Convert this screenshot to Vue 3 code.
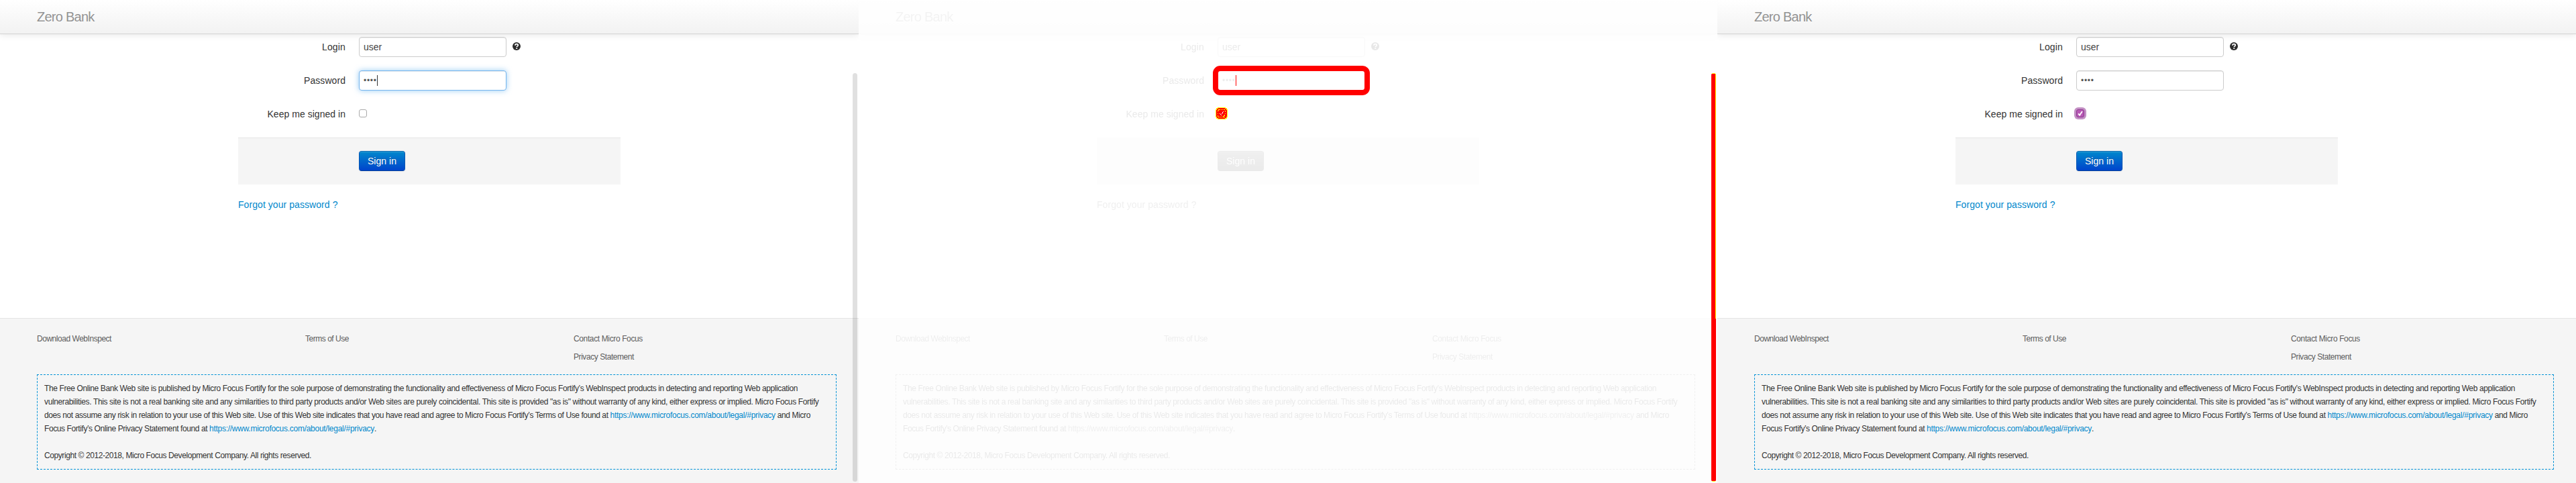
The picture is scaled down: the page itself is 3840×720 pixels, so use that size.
<script setup>
const panels = [
  { id: 'before', kind: 'live', focused: true, checked: false },
  { id: 'diff', kind: 'ghost', focused: false, checked: false },
  { id: 'after', kind: 'live', focused: false, checked: true },
]

const url = 'https://www.microfocus.com/about/legal/#privacy'

const lines = [
  [{ w: 1123, t: 'The Free Online Bank Web site is published by Micro Focus Fortify for the sole purpose of demonstrating the functionality and effectiveness of Micro Focus Fortify’s WebInspect products in detecting and reporting Web application' }],
  [{ w: 1154.5, t: 'vulnerabilities. This site is not a real banking site and any similarities to third party products and/or Web sites are purely coincidental. This site is provided "as is" without warranty of any kind, either express or implied. Micro Focus Fortify' }],
  [{ w: 843.5, t: 'does not assume any risk in relation to your use of this Web site. Use of this Web site indicates that you have read and agree to Micro Focus Fortify’s Terms of Use found at ' }, { w: 246.3, t: url, link: true }, { w: 52.2, t: ' and Micro' }],
  [{ w: 246, t: 'Focus Fortify’s Online Privacy Statement found at ' }, { w: 246, t: url, link: true }, { w: 0, t: '.' }],
  [{ w: 0, t: '\u00a0' }],
  [{ w: 398, t: 'Copyright © 2012-2018, Micro Focus Development Company. All rights reserved.' }],
]

// Spreads the tracking of a run so that it sets to the given width.
const vFit = {
  mounted(el, { value }) {
    if (!value) return
    const natural = el.getBoundingClientRect().width
    el.style.letterSpacing = `${(value - natural) / el.textContent.length}px`
  },
}
</script>

<template>
  <main class="board">
    <section v-for="p in panels" :key="p.id" class="panel">
      <div class="page" :class="p.kind">
        <header class="navbar"><span v-fit="85.5" class="brand">Zero Bank</span></header>

        <form class="form" @submit.prevent>
          <div class="row">
            <label><span v-fit="35">Login</span></label>
            <div class="input"><span v-fit="27">user</span></div>
            <svg class="help" width="12" height="12" viewBox="0 0 12 12">
              <circle cx="6" cy="6" r="6" fill="#2b2b2b" />
              <path d="M3.9 4.7C3.9 3.3 4.8 2.6 6.1 2.6S8.3 3.3 8.3 4.4C8.3 5.8 6.3 5.7 6.3 7.1" fill="none" stroke="#fff" stroke-width="1.7" />
              <rect x="5.3" y="8" width="1.9" height="1.8" fill="#fff" />
            </svg>
          </div>
          <div class="row">
            <label><span v-fit="62">Password</span></label>
            <div class="input" :class="{ focused: p.focused }">
              <span v-fit="19.6" class="dots">••••</span><i v-if="p.focused" class="caret"></i>
            </div>
          </div>
          <div class="row">
            <label><span v-fit="116.5">Keep me signed in</span></label>
            <div class="check" :class="{ on: p.checked }">
              <svg v-if="p.checked" width="12" height="12" viewBox="0 0 12 12">
                <path d="M3.1 6.4L5.1 8.7L8.9 3.1" fill="none" stroke="#fff" stroke-width="1.8" />
              </svg>
            </div>
          </div>
          <div class="actions"><button class="btn"><span v-fit="43">Sign in</span></button></div>
          <a class="forgot"><span v-fit="148.5">Forgot your password ?</span></a>
        </form>

        <footer class="footer">
          <div class="links">
            <div class="col"><a><span v-fit="111">Download WebInspect</span></a></div>
            <div class="col"><a><span v-fit="65">Terms of Use</span></a></div>
            <div class="col">
              <a><span v-fit="103">Contact Micro Focus</span></a>
              <a><span v-fit="90">Privacy Statement</span></a>
            </div>
          </div>
          <div class="disclaimer">
            <div v-for="(parts, i) in lines" :key="i" class="line">
              <span v-for="(s, j) in parts" :key="j" v-fit="s.w" :class="{ url: s.link }">{{ s.t }}</span>
            </div>
          </div>
        </footer>
      </div>

      <div v-if="p.id === 'before'" class="scrollbar"></div>
      <template v-if="p.id === 'diff'">
        <div class="ring"></div>
        <div class="diff-caret"></div>
        <svg class="diff-check" width="18" height="18" viewBox="0 0 18 18" shape-rendering="crispEdges">
          <path d="M3 0H15V1H17V3H18V15H17V17H15V18H3V17H1V15H0V3H1V1H3Z" fill="#ff0" />
          <path d="M4 1H14V2H16V4H17V14H16V16H14V17H4V16H2V14H1V4H2V2H4Z" fill="#f00" />
          <path d="M4 3h3v1h-3zM8 3h1v1h-1zM10 3h1v1h-1zM12 3h2v1h-2zM3 4h2v1h-2zM3 6h1v1h-1zM3 9h1v1h-1zM3 12h1v2h-1zM14 5h1v2h-1zM14 9h1v1h-1zM4 14h2v1h-2zM7 14h1v1h-1zM9 14h1v1h-1zM11 14h3v1h-3zM12 12h2v1h-2zM13 11h1v1h-1zM11 13h1v1h-1z" fill="#ff0" />
          <path d="M6 9h1v1h-1zM7 10h1v1h-1zM8 11h1v1h-1zM9 9h1v1h-1zM10 7h1v2h-1zM11 6h1v1h-1z" fill="#fff" />
        </svg>
        <div class="diff-scroll"></div>
      </template>
    </section>
  </main>
</template>

<style>
body { background: #fff; overflow: hidden; }
</style>

<style scoped>
.board { display: flex; width: 3840px; height: 720px; font-family: "Liberation Sans", Arial, sans-serif; font-size: 14px; line-height: 20px; color: #333; background: #fff; }
.panel { position: relative; width: 1280px; height: 720px; overflow: hidden; }
.page { display: flex; flex-direction: column; width: 1280px; height: 720px; background: #fff; }
.ghost { filter: grayscale(1); opacity: 0.1; }
span { white-space: pre; }
.navbar { box-sizing: border-box; flex: none; height: 51px; padding: 15px 55px; border-bottom: 1px solid #d4d4d4; background: linear-gradient(#fff, #f2f2f2); box-shadow: 0 1px 10px rgba(0, 0, 0, 0.1); }
.brand { display: inline-block; font-size: 20px; color: #929292; text-shadow: 0 1px 0 #fff; }
.form { display: flex; flex-direction: column; width: 570px; margin: 4px 0 0 355px; }
.row { display: flex; height: 30px; margin-bottom: 20px; }
label { width: 160px; margin-right: 20px; padding-top: 5px; text-align: right; }
.input { display: flex; align-items: center; box-sizing: border-box; width: 220px; height: 30px; padding: 0 6px; border: 1px solid #ccc; border-radius: 4px; background: #fff; box-shadow: inset 0 1px 1px rgba(0, 0, 0, 0.075); color: #444; }
.input.focused { border-color: #74b5ee; box-shadow: inset 0 1px 1px rgba(0, 0, 0, 0.075), 0 0 8px rgba(82, 168, 236, 0.6); }
.dots { font-size: 12px; line-height: 20px; color: #555; }
.caret { width: 1px; height: 16px; background: #333; }
.help { margin: 8px 0 0 9px; }
.check { box-sizing: border-box; width: 12px; height: 12px; margin-top: 8px; border: 1px solid #aaa; border-radius: 3px; background: #fff; }
.check.on { border-color: #8c3a8f; background: #b757b4; box-shadow: 0 0 0 3px #c38fc4; }
.check svg { display: block; margin: -1px; }
.actions { box-sizing: border-box; height: 70px; padding: 19px 0 0 180px; border-top: 1px solid #e5e5e5; background: #f5f5f5; }
.btn { display: block; box-sizing: border-box; width: 69px; height: 30px; padding: 0; border: 1px solid; border-color: #0467b0 #0455b4 #003b9a; border-radius: 4px; background: linear-gradient(#0088cc, #0044cc); box-shadow: inset 0 1px 0 rgba(255, 255, 255, 0.2), 0 1px 2px rgba(0, 0, 0, 0.05); color: #fff; font: 14px/20px "Liberation Sans", Arial, sans-serif; text-shadow: 0 -1px 0 rgba(0, 0, 0, 0.25); }
.forgot { margin-top: 20px; color: #08c; }
.footer { box-sizing: border-box; flex: none; height: 246px; margin-top: auto; padding: 20px 0 0 55px; border-top: 1px solid #e5e5e5; background: #f5f5f5; font-size: 12px; }
.links { display: flex; height: 63px; color: #5c5c5c; }
.col { width: 400px; }
.col a { display: block; height: 27px; }
.disclaimer { box-sizing: border-box; width: 1192px; height: 142px; padding: 10px; border: 1px dashed #0092d6; }
.line { display: flex; height: 20px; }
.url { color: #08c; }
.scrollbar { position: absolute; left: 1271px; top: 109px; width: 7px; height: 609px; border-radius: 4px; background: rgba(0, 0, 0, 0.12); }
.ring { position: absolute; box-sizing: border-box; left: 528px; top: 98px; width: 234px; height: 44px; border: 8px solid #f00; border-radius: 11px; }
.diff-caret { position: absolute; left: 562px; top: 112px; width: 1px; height: 16px; background: #f00; }
.diff-check { position: absolute; left: 532px; top: 160px; }
.diff-scroll { position: absolute; box-sizing: border-box; left: 1271px; top: 109px; width: 7px; height: 609px; border-radius: 3px; background: linear-gradient(#ff0, #ff0) 6px 0 / 1px 366px no-repeat, linear-gradient(#ff0 1px, #f00 1px, #f00 608px, #ff0 608px); }
</style>
